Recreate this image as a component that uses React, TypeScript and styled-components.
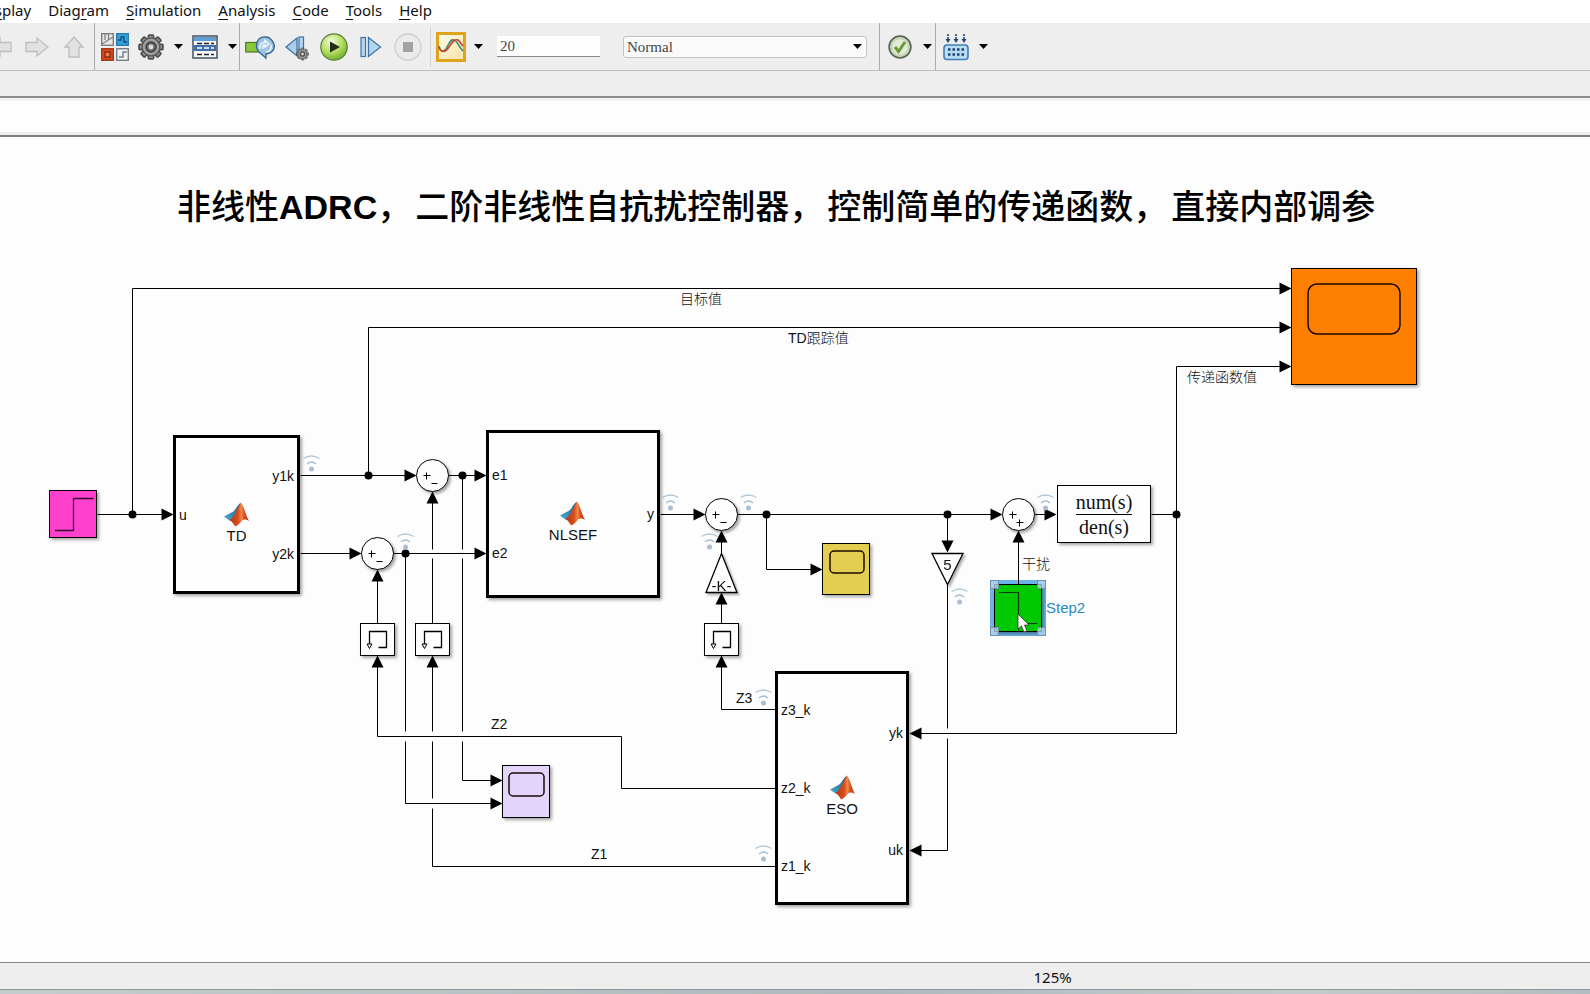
import React from "react";
import styled, { createGlobalStyle, css } from "styled-components";

const GlobalStyle = createGlobalStyle`
  *, *::before, *::after { box-sizing: border-box; }
  body {
    margin: 0;
    background: #fdfdfd;
    color: #111;
    font-family: "Liberation Sans", "Noto Sans CJK SC", sans-serif;
  }
  button, input, select { font: inherit; color: inherit; }
`;

const Window = styled.div`
  display: flex;
  flex-direction: column;
  min-height: 100vh;
  overflow: hidden;
`;

/* ---------- Menu bar ---------- */

const MenuBar = styled.nav`
  display: flex;
  gap: 17px;
  height: 23px;
  margin-left: -20px;
  background: #fff;
`;

const MenuButton = styled.button`
  padding: 0;
  border: 0;
  background: none;
  font-family: "Noto Sans", sans-serif;
  font-size: 15px;
  line-height: 20px;
  height: 20px;
  white-space: nowrap;

  u { text-underline-offset: 3px; }
`;

/* ---------- Toolbar ---------- */

const Toolbar = styled.div`
  display: flex;
  height: 48px;
  background: #eeeeee;
  border-bottom: 1px solid #bcbcbc;
`;

const ToolGroup = styled.div<{ $gap?: number; $start?: number; $end?: number; $plain?: boolean }>`
  display: flex;
  align-items: center;
  gap: ${(p) => p.$gap ?? 6}px;
  padding-left: ${(p) => p.$start ?? 5}px;
  padding-right: ${(p) => p.$end ?? 1}px;
  ${(p) =>
    !p.$plain &&
    css`
      border-right: 1px solid #acacac;
    `}
`;

const HistoryGroup = styled(ToolGroup)`
  margin-left: -15px;
`;

const ShortRule = styled.span`
  width: 1px;
  height: 40px;
  align-self: center;
  background: #d2d2d2;
`;

const ToolButton = styled.button`
  display: grid;
  place-items: center;
  width: 30px;
  height: 32px;
  padding: 0;
  border: 0;
  background: none;

  svg { display: block; }
`;

const CaretButton = styled(ToolButton)`
  width: 12px;
`;

const StopTime = styled.input`
  width: 103px;
  height: 21px;
  margin-left: 7px;
  padding: 0 3px;
  border: 0;
  border-bottom: 1px solid #8a8a8a;
  background: #fdfdfd;
  color: #444;
  font-family: "Liberation Serif", serif;
  font-size: 15px;
`;

const ModeBox = styled.div`
  display: grid;
  align-items: center;
  width: 244px;
  margin-left: 17px;

  > * { grid-area: 1 / 1; }
  > svg { justify-self: end; margin-right: 5px; pointer-events: none; }
`;

const ModeSelect = styled.select`
  appearance: none;
  width: 100%;
  height: 22px;
  padding: 0 3px;
  border: 1px solid #c2c2c2;
  border-radius: 3px;
  background: #fafafa;
  color: #444;
  font-family: "Liberation Serif", serif;
  font-size: 15px;
`;

const TabStrip = styled.div`
  height: 27px;
  background: #eeeeee;
  border-bottom: 2px solid #8c8c8c;
`;

const PathBar = styled.div`
  height: 39px;
  background: #fdfdfd;
  border-top: 3px solid #f2f2f2;
  border-bottom: 2px solid #808080;
  box-shadow: inset 0 -3px 0 #eeeeee;
`;

/* ---------- Model canvas ---------- */

const Canvas = styled.main`
  position: relative;
  flex: 1;
  min-height: 800px;
  overflow: hidden;
  background: #fdfdfd;
`;

const Wires = styled.svg`
  position: absolute;
  inset: 0;
  width: 100%;
  height: 100%;
`;

const Annotation = styled.h1<{ $x: number; $y: number }>`
  position: absolute;
  left: ${(p) => p.$x}px;
  top: ${(p) => p.$y}px;
  margin: 0;
  font-size: 34px;
  line-height: 44px;
  font-weight: 500;
  color: #000;
  white-space: nowrap;

  span + span { margin-left: 4px; }
  b { font-weight: 700; }
`;

type Box = { $x: number; $y: number; $w: number; $h: number };

const Node = styled.div<Box & { $fill?: string }>`
  position: absolute;
  left: ${(p) => p.$x}px;
  top: ${(p) => p.$y}px;
  width: ${(p) => p.$w}px;
  height: ${(p) => p.$h}px;
  border: 1px solid #000;
  background: ${(p) => p.$fill ?? "#fefefe"};
  box-shadow: 2px 2px 3px rgba(0, 0, 0, 0.35);

  > svg { display: block; }
`;

const FunctionNode = styled(Node)`
  display: grid;
  grid-template-columns: 1fr auto 1fr;
  border-width: 3px;
  padding: 0 3px;
`;

const Ports = styled.div<{ $right?: boolean; $gap?: number; $shift?: number }>`
  display: flex;
  flex-direction: column;
  justify-content: center;
  gap: ${(p) => p.$gap ?? 62}px;
  padding-top: ${(p) => p.$shift ?? 0}px;
  text-align: ${(p) => (p.$right ? "right" : "left")};
  font-size: 14px;
  line-height: 16px;
`;

const FunctionBody = styled.div`
  display: flex;
  flex-direction: column;
  align-items: center;
  justify-content: center;
  padding-top: 16px;
  font-size: 15px;
  line-height: 17px;
`;

const TransferNode = styled(Node)`
  display: flex;
  flex-direction: column;
  align-items: center;
  justify-content: center;
  font-family: "Liberation Serif", serif;
  font-size: 20px;
  line-height: 24px;
`;

const Numerator = styled.span`
  border-bottom: 1px solid #000;
`;

const SumNode = styled(Node)`
  border-radius: 50%;
`;

const GainNode = styled.div<Box>`
  position: absolute;
  left: ${(p) => p.$x}px;
  top: ${(p) => p.$y}px;
  width: ${(p) => p.$w}px;
  height: ${(p) => p.$h}px;
  display: grid;
  font-size: 15px;
  line-height: 14px;
  filter: drop-shadow(2px 2px 1px rgba(0, 0, 0, 0.3));

  > * { grid-area: 1 / 1; }
  > svg { overflow: visible; }
`;

const GainValue = styled.span<{ $low?: boolean }>`
  justify-self: center;
  align-self: ${(p) => (p.$low ? "end" : "start")};
  padding-top: 5px;
`;

const Selection = styled.div<Box>`
  position: absolute;
  left: ${(p) => p.$x}px;
  top: ${(p) => p.$y}px;
  width: ${(p) => p.$w}px;
  height: ${(p) => p.$h}px;
  background: #6db3ea;
`;

const Handles = styled.div<Box>`
  position: absolute;
  left: ${(p) => p.$x}px;
  top: ${(p) => p.$y}px;
  width: ${(p) => p.$w}px;
  height: ${(p) => p.$h}px;
  display: grid;
  grid-template-columns: 9px 9px;
  grid-template-rows: 9px 9px;
  place-content: space-between;
`;

const Handle = styled.span`
  border: 1px solid #6f8fa8;
  background: rgba(190, 215, 240, 0.75);
`;

const SignalLabel = styled.span<{ $x: number; $y: number; $size?: number; $color?: string }>`
  position: absolute;
  left: ${(p) => p.$x}px;
  top: ${(p) => p.$y}px;
  font-size: ${(p) => p.$size ?? 14}px;
  line-height: 18px;
  font-weight: 300;
  white-space: nowrap;
  color: ${(p) => p.$color ?? "#111"};
`;

const Floating = styled.svg<{ $x: number; $y: number }>`
  position: absolute;
  left: ${(p) => p.$x}px;
  top: ${(p) => p.$y}px;
`;

/* ---------- Status bar ---------- */

const StatusBar = styled.footer`
  display: flex;
  align-items: center;
  height: 27px;
  padding: 2px 0 0 65%;
  border-top: 1px solid #858585;
  background: #eeeeee;
  font-family: "Noto Sans", sans-serif;
  font-size: 15px;
  line-height: 20px;
`;

const DesktopEdge = styled.div`
  height: 5px;
  border-top: 1px solid #8f9799;
  background: linear-gradient(90deg, #c4cccd, #aeb9bb 55%, #c3cacc 82%, #b3bcbe);
`;

/* ---------- Icons ---------- */

const Caret = () => (
  <svg width="9" height="5" viewBox="0 0 9 5" aria-hidden="true">
    <path d="M0 0h9L4.5 5z" fill="#000" />
  </svg>
);

const GreyArrow = ({ turn }: { turn: number }) => (
  <svg width="24" height="20" viewBox="-12 -10 24 20" overflow="visible" aria-hidden="true">
    <path
      transform={`rotate(${turn})`}
      d={turn === -90 ? "M-10-5H0V-9L10 0 0 9V5H-10Z" : "M-11-4.500H0V-9L11 0 0 9V4.500H-11Z"}
      fill="#e2e2e2"
      stroke="#bdbdbd"
      strokeWidth="1.300"
    />
  </svg>
);

const LibraryIcon = () => (
  <svg width="28" height="28" viewBox="0 0 28 28" aria-hidden="true">
    <rect x=".7" y=".7" width="11.600" height="11.600" fill="#e6e8e8" stroke="#777" strokeWidth="1.300" />
    <path d="M4 1v6M7.500 1v6M1 11 12 4" stroke="#808080" strokeWidth="1.300" fill="none" />
    <rect x="15.700" y=".7" width="11.600" height="11.600" fill="#36a2dd" stroke="#2478ae" strokeWidth="1.300" />
    <path d="M17 7h3V4h3v5h3" stroke="#0c4a80" strokeWidth="1.300" fill="none" />
    <rect x=".7" y="15.700" width="11.600" height="11.600" fill="#d8481c" stroke="#a23512" strokeWidth="1.300" />
    <rect x="4" y="19" width="5" height="5" fill="#f08050" stroke="#7c1e05" strokeWidth="1.200" />
    <rect x="15.700" y="15.700" width="11.600" height="11.600" fill="#eef0f1" stroke="#707880" strokeWidth="1.300" />
    <path d="M18 24h4v-5h4" stroke="#75808a" strokeWidth="1.500" fill="none" />
  </svg>
);

const GearShape = ({ r }: { r: number }) => (
  <>
    {[0, 45, 90, 135].map((a) => (
      <rect
        key={a}
        x={-r * 0.22}
        y={-r}
        width={r * 0.44}
        height={r * 2}
        rx={r * 0.08}
        transform={`rotate(${a})`}
        fill="#8d8d8d"
        stroke="#4a4a4a"
        strokeWidth={r * 0.13}
      />
    ))}
    <circle r={r * 0.74} fill="#a2a2a2" stroke="#555" strokeWidth={r * 0.1} />
    <circle r={r * 0.42} fill="#6a6a6a" stroke="#3d3d3d" strokeWidth={r * 0.12} />
    <circle r={r * 0.2} fill="#dedede" />
  </>
);

const GearIcon = () => (
  <svg width="26" height="26" viewBox="-13 -13 26 26" aria-hidden="true">
    <GearShape r={12} />
  </svg>
);

const ExplorerIcon = () => (
  <svg width="26" height="24" viewBox="0 0 26 24" aria-hidden="true">
    <rect x="1" y="1" width="24" height="22" fill="#f5f7f8" stroke="#4f5a66" strokeWidth="1.600" />
    <rect x="2" y="2" width="22" height="4" fill="#5f9fd4" />
    <rect x="2" y="10" width="22" height="6" fill="#3f6ea8" />
    <path d="M5 8.500h5m2 0h5m2 0h3M5 19.500h5m2 0h5m2 0h3" stroke="#222" strokeWidth="1.400" />
    <path d="M5 13h5m2 0h5m2 0h3" stroke="#fff" strokeWidth="1.600" />
  </svg>
);

const UpdateIcon = () => (
  <svg width="30" height="26" viewBox="0 0 30 26" aria-hidden="true">
    <rect x=".7" y="8.500" width="13" height="9.500" fill="#8bc83a" stroke="#4c7a1b" strokeWidth="1.200" />
    <path
      d="M11.500 13C11 6 15 2.500 21 3l3 .5 3 3c3 4 3 8 0 11-2 2-4 2.500-6 2.500v4l-7-6c-1.500-1.500-2.500-3-2.500-5Z"
      fill="#9cc3e4"
      stroke="#35658f"
      strokeWidth="1.300"
    />
    <path
      d="M15 15c-1-5 2-7 5-6.500V6.500l4 3.500-4 3v-2c-2 0-2.500 1-2 4M26 11c1 5-2 7-5 6.500"
      fill="none"
      stroke="#f3f8fc"
      strokeWidth="1.500"
    />
  </svg>
);

const StepBackIcon = () => (
  <svg width="26" height="28" viewBox="0 0 26 28" aria-hidden="true">
    <path d="M13 5v18L2 14Z" fill="#a9cdea" stroke="#3e74a5" strokeWidth="1.300" />
    <rect x="15" y="4" width="4.500" height="18" fill="#b6d6ef" stroke="#3e74a5" strokeWidth="1.200" />
    <g transform="translate(18.500 21)">
      <GearShape r={6} />
    </g>
  </svg>
);

const PlayIcon = () => (
  <svg width="28" height="28" viewBox="0 0 28 28" aria-hidden="true">
    <defs>
      <radialGradient id="play" cx=".4" cy=".3" r=".8">
        <stop offset="0" stopColor="#f3fbe2" />
        <stop offset=".5" stopColor="#b5e063" />
        <stop offset="1" stopColor="#5ca31d" />
      </radialGradient>
    </defs>
    <circle cx="14" cy="14" r="13.200" fill="url(#play)" stroke="#5c7d37" strokeWidth="1.200" />
    <path d="M10 8.500v11l10-5.500Z" fill="#252c1c" />
  </svg>
);

const StepForwardIcon = () => (
  <svg width="22" height="22" viewBox="0 0 22 22" aria-hidden="true">
    <rect x="1" y="1.500" width="4.500" height="19" fill="#b6d6ef" stroke="#3e74a5" strokeWidth="1.200" />
    <path d="M8.500 1.500v19L20.500 11Z" fill="#b4d5ee" stroke="#3e74a5" strokeWidth="1.300" />
  </svg>
);

const StopIcon = () => (
  <svg width="28" height="28" viewBox="0 0 28 28" aria-hidden="true">
    <circle cx="14" cy="14" r="13" fill="#ebebeb" stroke="#cfcfcf" strokeWidth="1.300" />
    <rect x="9" y="9" width="10" height="10" fill="#a2a2a2" />
  </svg>
);

const ScopeIcon = () => (
  <svg width="30" height="30" viewBox="0 0 30 30" aria-hidden="true">
    <defs>
      <linearGradient id="paper" x1="0" y1="0" x2="1" y2="1">
        <stop offset="0" stopColor="#fdfbea" />
        <stop offset="1" stopColor="#f5e2a4" />
      </linearGradient>
    </defs>
    <rect x="1.500" y="1.500" width="27" height="27" fill="url(#paper)" stroke="#e0a41c" strokeWidth="3" />
    <path d="M3 14c1 5 4 7 7 3 3-5 4-10 8-9 4 1 5 8 9 11" fill="none" stroke="#3f8b80" strokeWidth="1.600" />
    <path d="M3 15c2 6 6 6 10 0s6-8 9-7c2 1 3 4 5 6" fill="none" stroke="#d0432a" strokeWidth="1.600" />
  </svg>
);

const CheckIcon = () => (
  <svg width="26" height="26" viewBox="0 0 26 26" aria-hidden="true">
    <circle cx="13" cy="13" r="10.800" fill="#e2ead9" stroke="#5a6850" strokeWidth="1.800" />
    <circle cx="13" cy="13" r="8.500" fill="none" stroke="#c2d2b0" strokeWidth="1.500" />
    <path d="m8 13 3.500 4.500L18 8" fill="none" stroke="#6a9a35" strokeWidth="3" />
  </svg>
);

const BuildIcon = () => (
  <svg width="26" height="28" viewBox="0 0 26 28" aria-hidden="true">
    <path d="M5 1v7M13 1v7M21 1v7" stroke="#20466e" strokeWidth="1.600" strokeDasharray="2 1" />
    <path d="M2.500 6h5L5 10ZM10.500 6h5L13 10ZM18.500 6h5L21 10Z" fill="#20466e" />
    <rect x="1" y="12" width="24" height="14.500" rx="3" fill="#b9dcf6" stroke="#3f7db4" strokeWidth="1.600" />
    <path d="M5 16.500h16M5 21.500h16" stroke="#1c4470" strokeWidth="2.600" strokeDasharray="2.500 2" />
  </svg>
);

const MatlabLogo = () => (
  <svg width="25" height="25" viewBox="0 0 25 25" aria-hidden="true">
    <defs>
      <linearGradient id="wing" x1="0" y1="1" x2="1" y2="0">
        <stop offset="0" stopColor="#4bb0cf" />
        <stop offset="1" stopColor="#1d4f88" />
      </linearGradient>
      <linearGradient id="peak" x1="0" y1="0" x2="1" y2="0">
        <stop offset="0" stopColor="#b83412" />
        <stop offset=".45" stopColor="#d94f1c" />
        <stop offset=".62" stopColor="#f08a4a" />
        <stop offset=".75" stopColor="#dc4f1e" />
        <stop offset="1" stopColor="#b23213" />
      </linearGradient>
    </defs>
    <path d="M0 14.500 7.500 10.500C11 10 13 3 17 .5 15 5 12 14 6 19Z" fill="url(#wing)" />
    <path d="M17 .5C20 4 22 14 25 19c-4-2-6-2-8 1-2 2-4 4-6 4.500C10 22 8 19.500 5.500 18 11 15 14 4 17 .5Z" fill="url(#peak)" />
  </svg>
);

const Logging = ({ x, y }: { x: number; y: number }) => (
  <Floating $x={x - 8} $y={y} width="17" height="17" viewBox="0 0 17 17" aria-hidden="true">
    <path d="M.5 3.500q8-5 16 0" fill="none" stroke="#b0c8d8" strokeWidth="1.300" />
    <path d="M4 9q4.500-4 9 0" fill="none" stroke="#a6c0d3" strokeWidth="1.300" />
    <circle cx="8.500" cy="14" r="2.500" fill="#a9bdd4" />
  </Floating>
);

const Pointer = () => (
  <Floating $x={1017} $y={476} width="13" height="20" viewBox="0 0 13 20" aria-hidden="true">
    <path d="M1 1v15l3.500-3 2.500 6 3-1.300-2.500-5.700H12Z" fill="#fff" stroke="#333" strokeWidth=".8" />
  </Floating>
);

/* ---------- Blocks ---------- */

const plus = (x: number, y: number) => `M${x - 3} ${y}h7M${x} ${y - 3}v7`;

const Sum = ({ x, y, second }: { x: number; y: number; second: "+" | "-" }) => (
  <SumNode $x={x - 16} $y={y - 16} $w={33} $h={33} role="img" aria-label="Sum">
    <svg width="31" height="31" viewBox="0 0 31 31">
      <path
        transform="translate(.5 .5)"
        d={`${plus(9, 15)}${second === "+" ? plus(16, 23) : "M14 23h6"}`}
        stroke="#000"
        fill="none"
      />
    </svg>
  </SumNode>
);

const Memory = ({ x, y }: { x: number; y: number }) => (
  <Node $x={x} $y={y} $w={35} $h={33} role="img" aria-label="Memory">
    <svg width="33" height="31" viewBox="0 0 33 31">
      <path d="M8.500 20V7.500h17v16h-8" fill="none" stroke="#000" strokeWidth="1.300" />
      <path d="M6 20h5l-2.500 4.500Z" fill="#fff" stroke="#000" />
    </svg>
  </Node>
);

type FunctionProps = {
  name: string;
  x: number;
  y: number;
  w: number;
  h: number;
  left: string[];
  right: string[];
  rightGap?: number;
  rightShift?: number;
};

const FunctionBlock = ({ name, x, y, w, h, left, right, rightGap, rightShift }: FunctionProps) => (
  <FunctionNode $x={x} $y={y} $w={w} $h={h}>
    <Ports>
      {left.map((p) => (
        <span key={p}>{p}</span>
      ))}
    </Ports>
    <FunctionBody>
      <MatlabLogo />
      {name}
    </FunctionBody>
    <Ports $right $gap={rightGap} $shift={rightShift}>
      {right.map((p) => (
        <span key={p}>{p}</span>
      ))}
    </Ports>
  </FunctionNode>
);

type ScopeProps = { x: number; y: number; w: number; h: number; fill: string; screen: number[] };

const Scope = ({ x, y, w, h, fill, screen: [sx, sy, sw, sh, r] }: ScopeProps) => (
  <Node $x={x} $y={y} $w={w} $h={h} $fill={fill} role="img" aria-label="Scope">
    <svg width={w - 2} height={h - 2}>
      <rect x={sx} y={sy} width={sw} height={sh} rx={r} fill="none" stroke="#1a0a00" strokeWidth="1.500" />
    </svg>
  </Node>
);

const wires = [
  "M97 377H164",
  "M132 377V151H1281",
  "M300 338H406",
  "M368 338V190H1281",
  "M300 416H352",
  "M448 338H476",
  "M393 416H476",
  "M462 338V412M462 421V594M462 604V643H492",
  "M405 416V594M405 604V666H492",
  "M432 486V421M432 412V365",
  "M377 486V442",
  "M377 528V599H621V651H775",
  "M432 528V594M432 604V661M432 671V729H775",
  "M660 377H695",
  "M737 377H992",
  "M766 377V432H812",
  "M721 416V404",
  "M721 486V466",
  "M721 528V572H775",
  "M947 377V406",
  "M947 447V591M947 601V713H920",
  "M1018 447V404",
  "M1034 377H1047",
  "M1151 377H1176",
  "M1176 229V596H920",
  "M1176 229H1281",
];

const junctions = [
  [132, 377],
  [368, 338],
  [462, 338],
  [405, 416],
  [766, 377],
  [947, 377],
  [1176, 377],
];

/* Tip position and heading of every arrow head, in degrees clockwise from right. */
const arrows = [
  [173, 377, 0],
  [416, 338, 0],
  [361, 416, 0],
  [486, 338, 0],
  [486, 416, 0],
  [705, 377, 0],
  [822, 432, 0],
  [1002, 377, 0],
  [1056, 377, 0],
  [1291, 151, 0],
  [1291, 190, 0],
  [1291, 229, 0],
  [502, 643, 0],
  [502, 666, 0],
  [432, 354, -90],
  [377, 432, -90],
  [377, 518, -90],
  [432, 518, -90],
  [721, 393, -90],
  [721, 455, -90],
  [721, 518, -90],
  [1018, 393, -90],
  [947, 415, 90],
  [909, 596, 180],
  [909, 713, 180],
];

const loggedSignals = [
  [311, 318],
  [405, 396],
  [670, 357],
  [748, 357],
  [709, 396],
  [959, 451],
  [1045, 357],
  [763, 552],
  [763, 708],
];

export default function App() {
  return (
    <Window>
      <GlobalStyle />
      <MenuBar aria-label="Menu">
        <MenuButton>Di<u>s</u>play</MenuButton>
        <MenuButton>Diag<u>r</u>am</MenuButton>
        <MenuButton><u>S</u>imulation</MenuButton>
        <MenuButton><u>A</u>nalysis</MenuButton>
        <MenuButton><u>C</u>ode</MenuButton>
        <MenuButton><u>T</u>ools</MenuButton>
        <MenuButton><u>H</u>elp</MenuButton>
      </MenuBar>

      <Toolbar role="toolbar" aria-label="Model tools">
        <HistoryGroup $gap={7} $start={0} $end={5}>
          <ToolButton aria-label="Back"><GreyArrow turn={180} /></ToolButton>
          <ToolButton aria-label="Forward"><GreyArrow turn={0} /></ToolButton>
          <ToolButton aria-label="Up to parent"><GreyArrow turn={-90} /></ToolButton>
        </HistoryGroup>
        <ToolGroup>
          <ToolButton aria-label="Library browser"><LibraryIcon /></ToolButton>
          <ToolButton aria-label="Model configuration"><GearIcon /></ToolButton>
          <CaretButton aria-label="Configuration options"><Caret /></CaretButton>
          <ToolButton aria-label="Model explorer"><ExplorerIcon /></ToolButton>
          <CaretButton aria-label="Explorer options"><Caret /></CaretButton>
        </ToolGroup>
        <ToolGroup $gap={7} $end={7} $plain>
          <ToolButton aria-label="Update diagram"><UpdateIcon /></ToolButton>
          <ToolButton aria-label="Step back"><StepBackIcon /></ToolButton>
          <ToolButton aria-label="Run"><PlayIcon /></ToolButton>
          <ToolButton aria-label="Step forward"><StepForwardIcon /></ToolButton>
          <ToolButton aria-label="Stop"><StopIcon /></ToolButton>
        </ToolGroup>
        <ShortRule />
        <ToolGroup $end={12}>
          <ToolButton aria-label="Simulation data inspector"><ScopeIcon /></ToolButton>
          <CaretButton aria-label="Inspector options"><Caret /></CaretButton>
          <StopTime aria-label="Simulation stop time" defaultValue="20" />
          <ModeBox>
            <ModeSelect aria-label="Simulation mode" defaultValue="Normal">
              <option>Normal</option>
            </ModeSelect>
            <Caret />
          </ModeBox>
        </ToolGroup>
        <ToolGroup $end={2}>
          <ToolButton aria-label="Model advisor"><CheckIcon /></ToolButton>
          <CaretButton aria-label="Advisor options"><Caret /></CaretButton>
        </ToolGroup>
        <ToolGroup $plain>
          <ToolButton aria-label="Build model"><BuildIcon /></ToolButton>
          <CaretButton aria-label="Build options"><Caret /></CaretButton>
        </ToolGroup>
      </Toolbar>
      <TabStrip />
      <PathBar />

      <Canvas>
        <Annotation $x={177} $y={48}>
          <span>非线性<b>ADRC</b>，</span>
          <span>二阶非线性自抗扰控制器，</span>
          <span>控制简单的传递函数，</span>
          <span>直接内部调参</span>
        </Annotation>

        <Selection $x={990} $y={443} $w={56} $h={56} />

        <Wires aria-hidden="true">
          <g transform="translate(.5 .5)">
            {wires.map((d) => (
              <path key={d} d={d} fill="none" stroke="#000" />
            ))}
            {junctions.map(([x, y]) => (
              <circle key={`${x}-${y}`} cx={x} cy={y} r="4" />
            ))}
            {arrows.map(([x, y, turn]) => (
              <path key={`${x}-${y}`} transform={`translate(${x} ${y}) rotate(${turn})`} d="M0 0-12-6V6Z" />
            ))}
          </g>
        </Wires>

        {loggedSignals.map(([x, y]) => (
          <Logging key={`${x}-${y}`} x={x} y={y} />
        ))}

        <SignalLabel $x={680} $y={153}>目标值</SignalLabel>
        <SignalLabel $x={788} $y={192}>TD跟踪值</SignalLabel>
        <SignalLabel $x={1187} $y={231}>传递函数值</SignalLabel>
        <SignalLabel $x={1022} $y={418}>干扰</SignalLabel>
        <SignalLabel $x={736} $y={552}>Z3</SignalLabel>
        <SignalLabel $x={491} $y={578}>Z2</SignalLabel>
        <SignalLabel $x={591} $y={708}>Z1</SignalLabel>

        <Node $x={49} $y={353} $w={48} $h={48} $fill="#ff40cf" role="img" aria-label="Step">
          <svg width="46" height="46">
            <path d="M5 39.500h18.500v-32h20" fill="none" stroke="#30082a" strokeWidth="1.300" />
          </svg>
        </Node>

        <FunctionBlock name="TD" x={173} y={298} w={127} h={159} left={["u"]} right={["y1k", "y2k"]} />
        <FunctionBlock name="NLSEF" x={486} y={293} w={174} h={168} left={["e1", "e2"]} right={["y"]} />
        <FunctionBlock
          name="ESO"
          x={775}
          y={534}
          w={134}
          h={234}
          left={["z3_k", "z2_k", "z1_k"]}
          right={["yk", "uk"]}
          rightGap={101}
          rightShift={7}
        />

        <Sum x={432} y={338} second="-" />
        <Sum x={377} y={416} second="-" />
        <Sum x={721} y={377} second="-" />
        <Sum x={1018} y={377} second="+" />

        <Memory x={360} y={486} />
        <Memory x={415} y={486} />
        <Memory x={704} y={486} />

        <GainNode $x={705} $y={416} $w={33} $h={40}>
          <svg width="33" height="40">
            <path d="M16.500.5 32 39.500H1Z" fill="#fefefe" stroke="#000" strokeWidth="1.300" />
          </svg>
          <GainValue $low>-K-</GainValue>
        </GainNode>
        <GainNode $x={931} $y={416} $w={33} $h={32}>
          <svg width="33" height="32">
            <path d="M1 .5h31L16.500 31.500Z" fill="#fefefe" stroke="#000" strokeWidth="1.300" />
          </svg>
          <GainValue>5</GainValue>
        </GainNode>

        <Scope x={822} y={406} w={48} h={52} fill="#e2cf52" screen={[7, 7, 34, 22, 4]} />
        <Scope x={502} y={628} w={48} h={53} fill="#e3d4fb" screen={[6, 7, 35, 23, 4]} />
        <Scope x={1291} y={131} w={126} h={117} fill="#ff8000" screen={[16, 15, 92, 50, 9]} />

        <TransferNode $x={1057} $y={348} $w={94} $h={58}>
          <Numerator>num(s)</Numerator>
          <span>den(s)</span>
        </TransferNode>

        <Node $x={994} $y={447} $w={48} $h={48} $fill="#00c800" role="img" aria-label="Step2">
          <svg width="46" height="46">
            <path d="M4 7.500h19.500v38M24 38.500h18" fill="none" stroke="#053805" strokeWidth="1.200" />
          </svg>
        </Node>
        <Handles $x={990} $y={443} $w={56} $h={56}>
          <Handle />
          <Handle />
          <Handle />
          <Handle />
        </Handles>
        <SignalLabel $x={1046} $y={462} $size={15} $color="#2a8ac6">Step2</SignalLabel>
        <Pointer />
      </Canvas>

      <StatusBar>125%</StatusBar>
      <DesktopEdge />
    </Window>
  );
}
